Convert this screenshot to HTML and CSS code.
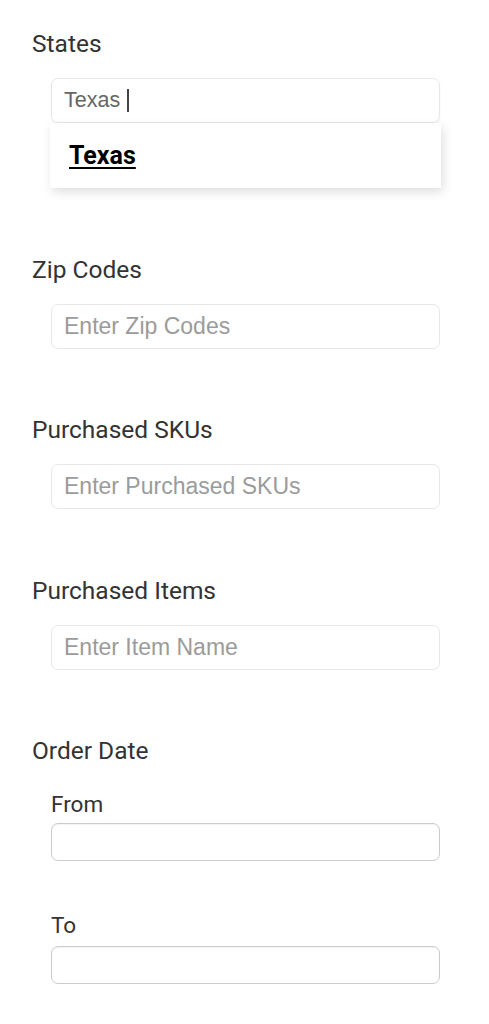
FILE: index.html
```html
<!DOCTYPE html>
<html>
<head>
<meta charset="utf-8">
<link rel="stylesheet" href="styles.css">
</head>
<body>
<div class="filters">
  <section class="field field-states">
    <div class="label">States</div>
    <div class="control">
      <div class="input typed"><span>Texas</span><span class="caret"></span></div>
      <div class="dropdown"><span class="option">Texas</span></div>
    </div>
  </section>
  <section class="field">
    <div class="label">Zip Codes</div>
    <div class="control"><div class="input placeholder">Enter Zip Codes</div></div>
  </section>
  <section class="field">
    <div class="label">Purchased SKUs</div>
    <div class="control"><div class="input placeholder">Enter Purchased SKUs</div></div>
  </section>
  <section class="field">
    <div class="label">Purchased Items</div>
    <div class="control"><div class="input placeholder">Enter Item Name</div></div>
  </section>
  <section class="field field-date">
    <div class="label">Order Date</div>
    <div class="control control-date">
      <div class="sublabel">From</div>
      <div class="date-input"></div>
      <div class="sublabel sublabel-to">To</div>
      <div class="date-input"></div>
    </div>
  </section>
</div>
</body>
</html>
```
FILE: styles.css
```css
html, body {
  margin: 0;
  padding: 0;
  background: #ffffff;
}
body {
  font-family: Roboto, "Liberation Sans", sans-serif;
  color: #333333;
}
.filters {
  padding: 29px 49px 0 32px;
  display: flex;
  flex-direction: column;
}
.field {
  display: flex;
  flex-direction: column;
  margin-bottom: 66.5px;
}
.label {
  font-size: 24.5px;
  line-height: 29px;
  height: 29px;
  color: #333;
}
.control {
  padding-left: 19px;
  margin-top: 20px;
  display: flex;
  flex-direction: column;
}
.input {
  height: 45px;
  box-sizing: border-box;
  border: 1px solid #e7e7e7;
  border-radius: 7px;
  padding: 0 12px;
  display: flex;
  align-items: center;
  font-family: "Liberation Sans", Arial, sans-serif;
  font-size: 23px;
}
.placeholder {
  color: #9b9b9b;
}
.typed {
  color: #666666;
  font-size: 21.5px;
  box-shadow: 0 1px 2px rgba(0,0,0,0.06);
}
.caret {
  display: inline-block;
  width: 1.5px;
  height: 23px;
  background: #444;
  margin-left: 7px;
}
.dropdown {
  height: 65px;
  margin-left: -1px;
  margin-right: -1px;
  background: #fff;
  box-shadow: 2px 4px 10px rgba(0,0,0,0.13);
  display: flex;
  align-items: center;
  padding-left: 19px;
}
.option {
  font-family: Roboto, "Liberation Sans", sans-serif;
  font-weight: 700;
  font-size: 25px;
  color: #000;
  text-decoration: underline;
  text-underline-offset: 3px;
  text-decoration-thickness: 2px;
}
.control-date {
  margin-top: 26px;
}
.sublabel {
  font-size: 22.5px;
  line-height: 27px;
  height: 27px;
  color: #333;
  margin-bottom: 5px;
}
.sublabel-to {
  margin-top: 51px;
  margin-bottom: 7px;
}
.date-input {
  height: 38px;
  box-sizing: border-box;
  border: 1.5px solid #cbcbcb;
  border-radius: 7px;
  box-shadow: inset 0 1px 1px rgba(0,0,0,0.05);
}
```
